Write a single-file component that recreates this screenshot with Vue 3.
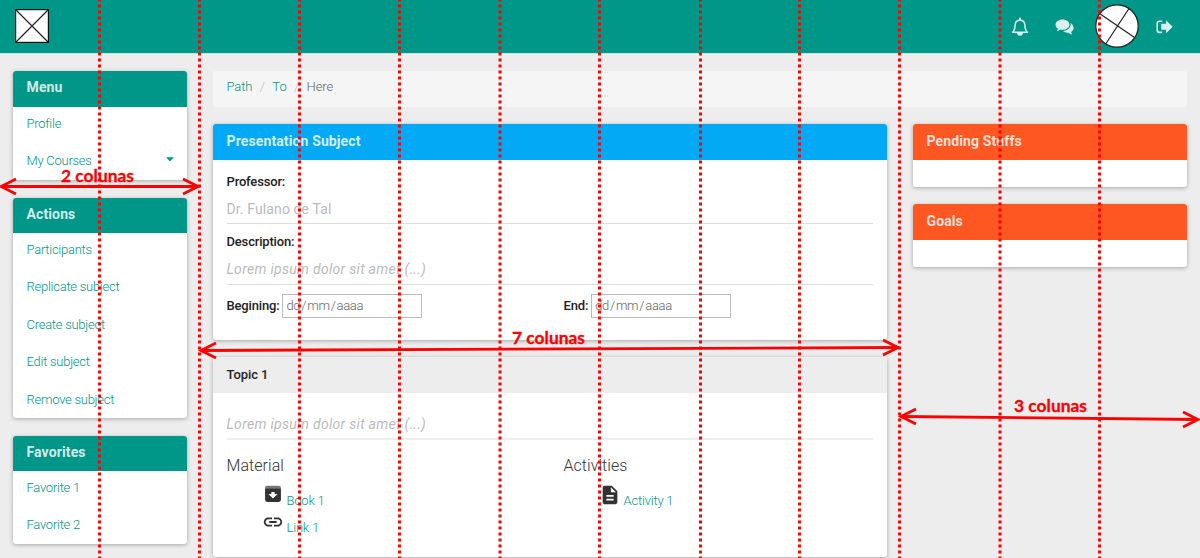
<script setup>
const menus = [
  { title: 'Menu', cls: 'menu', items: ['Profile', 'My Courses'] },
  { title: 'Actions', cls: 'actions', items: ['Participants', 'Replicate subject', 'Create subject', 'Edit subject', 'Remove subject'] },
  { title: 'Favorites', cls: 'favorites', items: ['Favorite 1', 'Favorite 2'] },
]
const guides = [99.5, 199.5, 299.5, 399.5, 500, 599.5, 700.5, 799.5, 899.5, 1000, 1099.5]
const spans = [
  { x1: 1, y1: 186.5, x2: 198, y2: 186.5, label: '2 colunas', tx: 61, ty: 182 },
  { x1: 201, y1: 350.5, x2: 898, y2: 347.5, label: '7 colunas', tx: 512, ty: 344 },
  { x1: 901, y1: 416.5, x2: 1198, y2: 419.5, label: '3 colunas', tx: 1014, ty: 412 },
]
</script>

<template>
  <div class="page">
    <header class="topbar">
      <svg class="logo" width="34" height="34" viewBox="0 0 34 34">
        <rect x=".6" y=".6" width="32.8" height="32.8" fill="#fff" stroke="#111" stroke-width="1.2" />
        <path d="M1 1L33 33M33 1L1 33" stroke="#222" stroke-width="1.2" />
      </svg>
      <nav class="tools">
        <svg class="bell" width="18" height="19" viewBox="0 0 18 19" fill="none" stroke="#d9f0ed" stroke-width="1.5">
          <path d="M1.5 15.3C3.7 13.4 4 11.3 4.1 8.2C4.2 5 6 3.2 9 3.2S13.8 5 13.9 8.2C14 11.3 14.3 13.4 16.5 15.3Z" stroke-linejoin="round" />
          <path d="M9 .8V3" stroke-width="1.8" />
          <path d="M6.8 15.8A2.2 2.2 0 0 0 11.2 15.8Z" fill="#d9f0ed" />
        </svg>
        <svg class="chat" width="20" height="16" viewBox="0 0 20 16" fill="#d9f0ed">
          <path d="M7.5 .5C3.6 .5 .5 2.8 .5 5.7C.5 7.3 1.5 8.7 3 9.7C2.8 10.5 2.3 11.2 1.7 11.9C3.3 11.7 4.6 11.2 5.7 10.5C6.3 10.7 6.9 10.8 7.5 10.8C11.4 10.8 14.5 8.5 14.5 5.7S11.4 .5 7.5 .5Z" />
          <path d="M15.7 4C16.4 8.1 12.7 11.8 8 12.1C9.2 13.2 11 13.8 12.9 13.7C14 14.6 15.7 15.2 17.4 15.3C16.7 14.5 16.2 13.8 16.1 12.9C17.6 12 18.6 10.7 18.6 9.1C18.6 7 17.5 5.3 15.7 4Z" />
        </svg>
        <svg class="avatar" width="44" height="44" viewBox="0 0 44 44">
          <circle cx="22" cy="22" r="21.2" fill="#fff" stroke="#222" stroke-width="1.2" />
          <path d="M4.5 9.5L39.5 33.5M34 4.5L11 39.5" stroke="#222" stroke-width="1.2" />
        </svg>
        <svg class="exit" width="17" height="14" viewBox="0 0 17 14">
          <path d="M6.2 1.2H3.5Q1.2 1.2 1.2 3.5V10Q1.2 12.4 3.5 12.4H6.2" fill="none" stroke="#d9f0ed" stroke-width="1.6" />
          <path d="M10 .3L16.700 6.8L10 13.3V9.800H5.2V3.800H10Z" fill="#d9f0ed" />
        </svg>
      </nav>
    </header>

    <div class="layout">
      <aside class="side">
        <section v-for="m in menus" :key="m.title" class="card" :class="m.cls">
          <h3 class="head teal">{{ m.title }}</h3>
          <ul>
            <li v-for="item in m.items" :key="item">
              <a>{{ item }}</a>
              <svg v-if="item === 'My Courses'" width="8" height="5" viewBox="0 0 8 5"><path d="M0 .2H8L4 4.5Z" fill="#009688" /></svg>
            </li>
          </ul>
        </section>
      </aside>

      <div class="content">
        <nav class="crumbs"><a>Path</a><i>/</i><a>To</a><i>/</i><span>Here</span></nav>
        <div class="columns">
          <main>
            <section class="card subject">
              <h3 class="head blue">Presentation Subject</h3>
              <div class="body">
                <label class="row">Professor:</label>
                <div class="field">Dr. Fulano de Tal</div>
                <label class="row second">Description:</label>
                <div class="field italic">Lorem ipsum dolor sit amet (...)</div>
                <div class="dates">
                  <div><label>Begining:</label><span class="date">dd<b>/</b>mm<b>/</b>aaaa</span></div>
                  <div><label>End:</label><span class="date">dd<b>/</b>mm<b>/</b>aaaa</span></div>
                </div>
              </div>
            </section>
            <section class="card topic">
              <h3 class="head gray">Topic 1</h3>
              <div class="body">
                <div class="field italic">Lorem ipsum dolor sit amet (...)</div>
                <div class="resources">
                  <div>
                    <h4>Material</h4>
                    <div class="res">
                      <svg width="20" height="20" viewBox="0 0 24 24" fill="#333"><path d="M2.5 4.5Q2.5 2 5 2H19Q21.500 2 21.500 4.500V5H2.500Z" fill="#777" /><path d="M2.500 5H21.500V19Q21.500 21.500 19 21.500H5Q2.500 21.500 2.500 19Z" /><path d="M10 9.500H14V12H17.500L12 17.500L6.500 12H10Z" fill="#fff" /></svg>
                      <a>Book 1</a>
                    </div>
                    <div class="res">
                      <svg width="22" height="22" viewBox="0 0 24 24" fill="#333"><path d="M3.9 12c0-1.710 1.390-3.100 3.100-3.100h4V7H7c-2.760 0-5 2.240-5 5s2.240 5 5 5h4v-1.900H7c-1.710 0-3.100-1.390-3.100-3.100zM8 13h8v-2H8v2zm9-6h-4v1.900h4c1.710 0 3.100 1.390 3.100 3.100s-1.390 3.100-3.100 3.100h-4V17h4c2.760 0 5-2.240 5-5s-2.240-5-5-5z" /></svg>
                      <a>Link 1</a>
                    </div>
                  </div>
                  <div>
                    <h4>Activities</h4>
                    <div class="res">
                      <svg width="22" height="22" viewBox="0 0 24 24" fill="#333"><path d="M14 2H6c-1.100 0-1.990.9-1.990 2L4 20c0 1.100.89 2 1.990 2H18c1.100 0 2-.9 2-2V8l-6-6zm2 16H8v-2h8v2zm0-4H8v-2h8v2zm-3-5V3.500L18.500 9H13z" /></svg>
                      <a>Activity 1</a>
                    </div>
                  </div>
                </div>
              </div>
            </section>
          </main>
          <aside class="right">
            <section class="card"><h3 class="head orange">Pending Stuffs</h3></section>
            <section class="card"><h3 class="head orange">Goals</h3></section>
          </aside>
        </div>
      </div>
    </div>

    <svg class="overlay" width="1200" height="558" viewBox="0 0 1200 558">
      <line v-for="x in guides" :key="x" :x1="x" :x2="x" y1="-1.5" y2="558" stroke="#f00" stroke-width="3" stroke-dasharray="3 3" />
      <g v-for="s in spans" :key="s.label" fill="none" stroke="#f00" stroke-width="2.8">
        <line :x1="s.x1" :y1="s.y1" :x2="s.x2" :y2="s.y2" />
        <path :d="`M${s.x1 + 15} ${s.y1 - 7.500}L${s.x1} ${s.y1}L${s.x1 + 15} ${s.y1 + 7.500}`" />
        <path :d="`M${s.x2 - 15} ${s.y2 - 7.500}L${s.x2} ${s.y2}L${s.x2 - 15} ${s.y2 + 7.500}`" />
        <text :x="s.tx" :y="s.ty" textLength="73" lengthAdjust="spacingAndGlyphs">{{ s.label }}</text>
      </g>
    </svg>
  </div>
</template>

<style>
body { margin: 0; overflow: hidden; }
</style>
<style scoped>
* { box-sizing: border-box; }
.page { position: relative; width: 1200px; height: 558px; overflow: hidden; background: #ededed; font: 300 13px/18px Roboto, sans-serif; letter-spacing: -.1px; color: #666; }
.topbar { height: 53px; background: #009688; display: flex; justify-content: space-between; box-shadow: 0 1px 1px #cfe3e1; }
.logo { margin: 9px 0 0 15px; }
.tools { display: flex; align-items: flex-start; padding-right: 27px; }
.bell { margin: 17px 26px 0 0; }
.chat { margin: 19px 20px 0 0; }
.avatar { margin: 4px 17px 0 0; }
.exit { margin: 20px 0 0; }
.layout { display: flex; padding: 18px 13px 0; gap: 26px; }
.side { width: 174px; display: flex; flex-direction: column; gap: 17.500px; flex: none; }
.card { background: #fff; border-radius: 3px; box-shadow: 0 1px 4px rgba(0, 0, 0, .3); overflow: hidden; flex: none; }
.menu { height: 109px; }
.actions { height: 220.500px; }
.favorites { height: 108px; }
.head { margin: 0; height: 36px; padding: 0 13.500px; font-size: 14px; font-weight: 700; line-height: 34px; letter-spacing: .12px; color: rgba(255, 255, 255, .84); }
.side .head { height: 35.500px; line-height: 33px; }
.teal { background: #009688; }
.blue { background: #03a9f4; }
.orange { background: #ff5722; }
.gray { background: #ededed; color: #222; font-size: 13px; font-weight: 500; line-height: 36px; letter-spacing: -.1px; }
ul { margin: 0; padding: 0; list-style: none; }
li { height: 37.400px; padding: 0 13.500px; line-height: 34px; letter-spacing: -.26px; display: flex; justify-content: space-between; align-items: flex-start; }
li svg { margin-top: 13px; }
a { color: #009688; }
.content { flex: 1; min-width: 0; }
.crumbs { height: 36px; border-radius: 3px; background: #f5f5f5; padding-left: 13.500px; line-height: 32px; display: flex; }
.crumbs i { font-style: normal; color: #bbb; width: 20px; text-align: center; }
.columns { display: flex; gap: 26px; margin-top: 17px; }
main { width: 674px; display: flex; flex-direction: column; gap: 17px; }
.right { width: 274px; display: flex; flex-direction: column; gap: 17px; }
.right .card { height: 63px; }
.subject { height: 216px; }
.topic { height: 200px; }
.body { padding: 13px 14px 0 13.500px; }
label { color: #222; font-weight: 500; letter-spacing: -.17px; }
.row { display: block; height: 18px; }
.second { margin-top: 9px; }
.field { height: 33px; padding-top: 8px; font-size: 14px; line-height: 20px; letter-spacing: .12px; font-weight: 400; color: #bbb; border-bottom: 1px solid #ddd; }
.italic { font-style: italic; height: 34px; letter-spacing: .3px; }
.topic .field { height: 34px; margin-top: 0; border-bottom: 2px solid #eee; }
.dates, .resources { display: grid; grid-template-columns: 337px 1fr; }
.dates { margin-top: 9px; }
.dates div { display: flex; align-items: center; gap: 3px; }
.date { width: 140px; height: 24px; border: 1px solid #bbb; padding-left: 3px; line-height: 22px; letter-spacing: -.3px; }
.date b { font-weight: 300; padding: 0 1px; }
h4 { margin: 15px 0 7px; font-size: 16px; line-height: 22px; font-weight: 300; color: #333; letter-spacing: .05px; }
.res { display: flex; margin-left: 35px; height: 26.500px; }
.res svg { flex: none; }
.res svg[width="20"] { margin: 0 1px; }
.res a { margin: 8px 0 0 3px; letter-spacing: -.2px; }
.overlay { position: absolute; inset: 0; }
.overlay text { font: 700 17px Lato, sans-serif; letter-spacing: 0; fill: #f00; stroke: #f00; stroke-width: .3px; }
</style>
